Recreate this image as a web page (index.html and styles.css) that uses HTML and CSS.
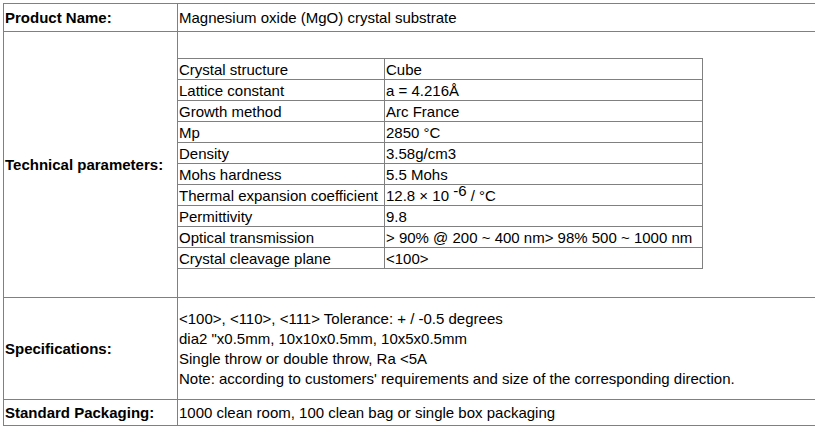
FILE: index.html
```html
<!DOCTYPE html>
<html>
<head>
<meta charset="utf-8">
<link rel="stylesheet" href="styles.css">
</head>
<body>
<div class="page">
<table class="spec">
  <tr class="row-name">
    <td class="label">Product Name:</td>
    <td class="value">Magnesium oxide (MgO) crystal substrate</td>
  </tr>
  <tr class="row-tech">
    <td class="label">Technical parameters:</td>
    <td class="value nested">
      <table class="params">
        <tr><td class="pname">Crystal structure</td><td class="pval">Cube</td></tr>
        <tr><td class="pname">Lattice constant</td><td class="pval">a = 4.216Å</td></tr>
        <tr><td class="pname">Growth method</td><td class="pval">Arc France</td></tr>
        <tr><td class="pname">Mp</td><td class="pval">2850 °C</td></tr>
        <tr><td class="pname">Density</td><td class="pval">3.58g/cm3</td></tr>
        <tr><td class="pname">Mohs hardness</td><td class="pval">5.5 Mohs</td></tr>
        <tr><td class="pname">Thermal expansion coefficient</td><td class="pval">12.8 × 10 <sup>-6</sup> / °C</td></tr>
        <tr><td class="pname">Permittivity</td><td class="pval">9.8</td></tr>
        <tr><td class="pname">Optical transmission</td><td class="pval">&gt; 90% @ 200 ~ 400 nm&gt; 98% 500 ~ 1000 nm</td></tr>
        <tr><td class="pname">Crystal cleavage plane</td><td class="pval">&lt;100&gt;</td></tr>
      </table>
    </td>
  </tr>
  <tr class="row-specs">
    <td class="label">Specifications:</td>
    <td class="value multiline">&lt;100&gt;, &lt;110&gt;, &lt;111&gt; Tolerance: + / -0.5 degrees<br>dia2 "x0.5mm, 10x10x0.5mm, 10x5x0.5mm<br>Single throw or double throw, Ra &lt;5A<br>Note: according to customers' requirements and size of the corresponding direction.</td>
  </tr>
  <tr class="row-pack">
    <td class="label">Standard Packaging:</td>
    <td class="value">1000 clean room, 100 clean bag or single box packaging</td>
  </tr>
</table>
</div>
</body>
</html>
```

FILE: styles.css
```css
html, body {
  margin: 0;
  padding: 0;
  background: #fff;
  overflow: hidden;
}
.page {
  padding: 3px 0 0 3px;
  font-family: "Liberation Sans", Arial, sans-serif;
  font-size: 15px;
  color: #000;
}
.spec {
  border-collapse: collapse;
  table-layout: fixed;
  width: 840px;
}
.spec > tbody > tr > td {
  border: 1px solid #808080;
  padding: 0 1px;
  line-height: 20px;
  vertical-align: middle;
}
.spec td.label {
  width: 171px;
  font-weight: bold;
}
.row-name > td { height: 27px; }
.row-tech > td { height: 265px; }
.row-specs > td { height: 100px; }
.row-pack > td { height: 25px; }
.spec td.multiline {
  padding-top: 1px;
}
.spec td.nested {
  padding: 0;
}
.params {
  border-collapse: collapse;
  margin: 26px 0 28px -1px;
  width: 526px;
}
.params td {
  border: 1px solid #808080;
  padding: 1px 1px 0;
  height: 19px;
  line-height: 19px;
  white-space: nowrap;
}
.params td.pname {
  width: 204px;
}
.params sup {
  font-size: 15px;
  line-height: 0;
  vertical-align: 5px;
}
```
